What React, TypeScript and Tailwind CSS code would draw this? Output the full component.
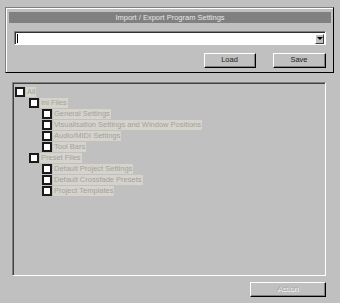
const font = { fontFamily: '"Liberation Sans", Arial, sans-serif' };

type Item = { label: string; level: number };

const items: Item[] = [
  { label: "All", level: 0 },
  { label: "Ini Files", level: 1 },
  { label: "General Settings", level: 2 },
  { label: "Visualisation Settings and Window Positions", level: 2 },
  { label: "Audio/MIDI Settings", level: 2 },
  { label: "Tool Bars", level: 2 },
  { label: "Preset Files", level: 1 },
  { label: "Default Project Settings", level: 2 },
  { label: "Default Crossfade Presets", level: 2 },
  { label: "Project Templates", level: 2 },
];

const indent = ["pl-[1px]", "pl-[15px]", "pl-[28px]"];

function Boton({ label, disabled }: { label: string; disabled?: boolean }) {
  return (
    <div className="w-full h-full border-t border-l border-white border-r border-b border-r-black border-b-black">
      <div className="w-full h-full flex items-center justify-center border-r border-b border-[#808080]">
        <span
          className={
            disabled
              ? "text-[7.5px] text-[#a8a8a8] [text-shadow:1px_1px_0_#ffffff]"
              : "text-[7.5px] text-[#202020]"
          }
        >
          {label}
        </span>
      </div>
    </div>
  );
}

export default function App() {
  return (
    <div className="w-[340px] h-[303px] bg-[#c0c0c0] flex flex-col" style={font}>
      {/* panel de import/export */}
      <div className="mt-[7px] ml-[5px] w-[329px] h-[66px] border-t border-l border-[#808080] border-r border-b border-r-black border-b-black">
        <div className="w-full h-full border-t border-l border-white px-[2px] pt-[3px]">
          <div className="h-[11px] w-[322px] bg-[#808080] flex items-center justify-center">
            <span className="text-[7.5px] text-[#e6e6e6] leading-none">
              Import / Export Program Settings
            </span>
          </div>

          <div className="mt-[8px] ml-[5px] w-[312px] h-[14px] border-t border-l border-[#808080] border-r border-b border-r-white border-b-white">
            <div className="w-full h-full bg-white border-t border-l border-[#303030] flex items-center justify-between pl-[1px] pr-[1px]">
              <div className="w-px h-[9px] bg-black" />
              <div className="w-[9px] h-[10px] bg-[#c0c0c0] border-t border-l border-white border-r border-b border-r-[#404040] border-b-[#404040] flex items-center justify-center">
                <div className="w-0 h-0 border-l-[3px] border-r-[3px] border-t-[3px] border-l-transparent border-r-transparent border-t-black" />
              </div>
            </div>
          </div>

          <div className="mt-[8px] flex gap-[17px] pl-[195px]">
            <div className="w-[52px] h-[15px]">
              <Boton label="Load" />
            </div>
            <div className="w-[53px] h-[15px]">
              <Boton label="Save" />
            </div>
          </div>
        </div>
      </div>

      {/* arbol de opciones */}
      <div className="mt-[9px] ml-[12px] w-[314px] h-[194px] border-t border-l border-[#808080] border-r border-b border-r-white border-b-white">
        <div className="w-full h-full border-t border-l border-[#404040] pt-[2px]">
          {items.map((item) => (
            <div
              key={item.label}
              className={`h-[11px] flex items-center gap-[1px] ${indent[item.level]}`}
            >
              <div className="w-[10px] h-[10px] bg-white border-2 border-[#1a1a1a] shrink-0" />
              <span className="bg-[#d6d3cb] text-[7.5px] text-[#a2a2a2] leading-[10px] px-[1px]">
                {item.label}
              </span>
            </div>
          ))}
        </div>
      </div>

      <div className="mt-[6px] ml-[250px] w-[76px] h-[15px]">
        <Boton label="Action" disabled />
      </div>
    </div>
  );
}
